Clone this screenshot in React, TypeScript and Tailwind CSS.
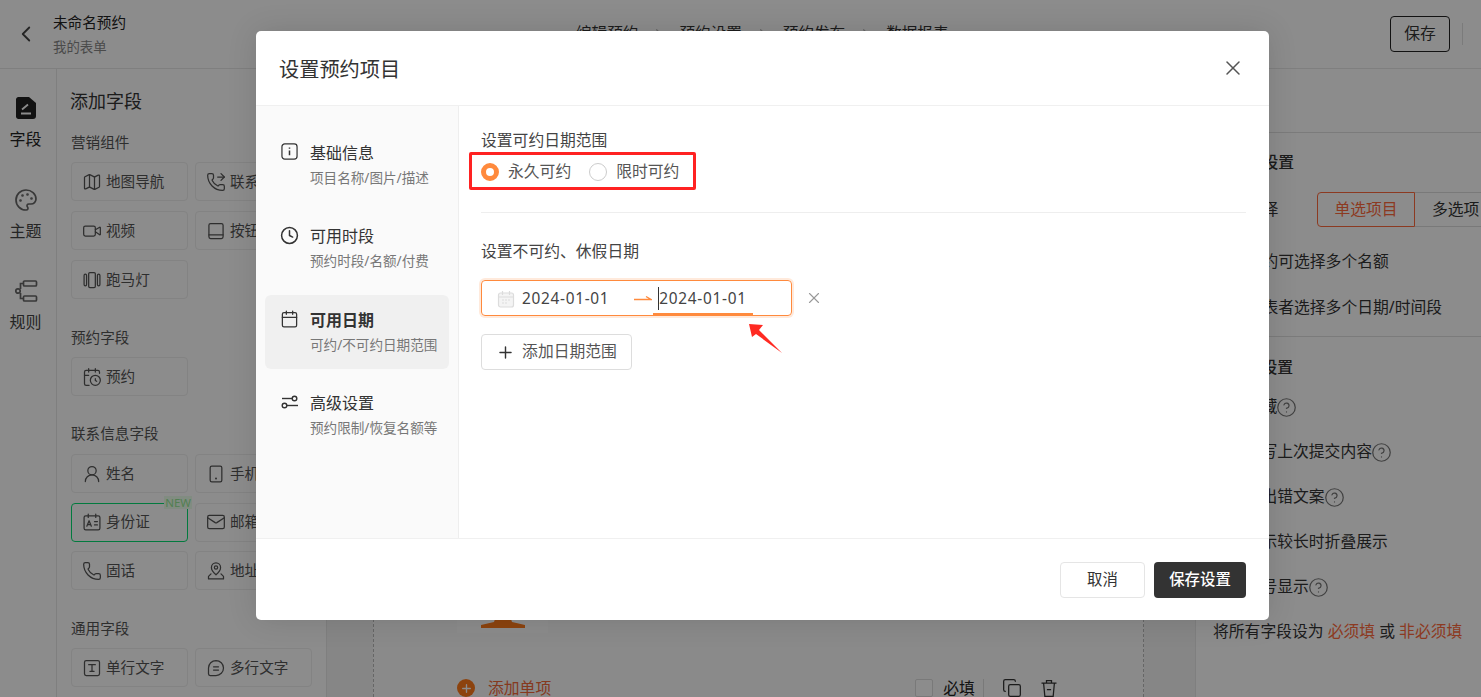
import React from "react";
import { ChevronLeft, ChevronRight, X, Plus, Map as MapIcon, PhoneForwarded, Video, Phone, Mail, CalendarClock, UserRound, CircleQuestionMark, Palette, Clock, Calendar, Copy } from "lucide-react";

const S = ({ children, className = "" }: { children: React.ReactNode; className?: string }) => (
  <svg viewBox="0 0 24 24" fill="none" stroke="currentColor" strokeWidth="1.5" strokeLinecap="round" strokeLinejoin="round" className={className}>
    {children}
  </svg>
);
const ic = "w-[20px] h-[20px] shrink-0";

const BtnIcon = () => <S className={ic}><rect x="3.5" y="3" width="17" height="18" rx="2" /><path d="M3.5 16.5h17" /></S>;
const Marquee = () => <S className={ic}><rect x="8" y="3" width="8" height="18" rx="1.5" /><rect x="2.5" y="5" width="3" height="14" rx="1.5" /><rect x="18.5" y="5" width="3" height="14" rx="1.5" /></S>;
const Tablet = () => <S className={ic}><rect x="5" y="2.5" width="14" height="19" rx="2" /><path d="M12 17.5h.01" strokeWidth="2.4" /></S>;
const IdIcon = () => <S className={ic}><rect x="2.5" y="4.5" width="19" height="17" rx="2" /><path d="M7.5 2.5v4M16.5 2.5v4M5.8 17l2.7-6.5L11.2 17M6.8 15h3.4M15 11.5h3.5M15 15.5h3.5" /></S>;
const AddrIcon = () => <S className={ic}><path d="M12 16.5s-5.5-4.6-5.5-8.8a5.5 5.5 0 0 1 11 0c0 4.2-5.5 8.800-5.500 8.800z" /><circle cx="12" cy="7.800" r="2" /><path d="M6 15.500l-3 3v3h18v-3l-3-3" /></S>;
const TextIcon = () => <S className={ic}><rect x="3" y="3" width="18" height="18" rx="2" /><path d="M8 8h8M12 8v8M9.500 16h5" /></S>;
const MultiIcon = () => <S className={ic}><path d="M12 3a9 9 0 0 1 0 18H5a2 2 0 0 1-2-2v-7a9 9 0 0 1 9-9z" /><path d="M9 10.500h6M9 14.500h6" /></S>;

const Tile = ({ icon, label }: { icon: React.ReactNode; label: string }) => (
  <div className="flex h-[39px] w-[117px] items-center gap-[4px] rounded-[4px] border border-[#eeeeee] pl-[10px] text-[14.6px] text-[#555]">
    {icon}
    <span className="whitespace-nowrap">{label}</span>
  </div>
);

const GreenTile = ({ icon, label }: { icon: React.ReactNode; label: string }) => (
  <div className="relative flex h-[39px] w-[117px] items-center gap-[4px] rounded-[4px] border border-green-400 pl-[10px] text-[14.6px] text-[#555]">
    {icon}
    <span className="whitespace-nowrap">{label}</span>
    <span className="absolute right-[-5px] top-[-8px] bg-[#ecffec] px-[1px] text-[11.5px] leading-[13px] text-[#96e896]">NEW</span>
  </div>
);

const Head = ({ children, className }: { children: React.ReactNode; className: string }) => (
  <div className={"h-[20px] text-[14.6px] leading-[20px] text-[#555] " + className}>{children}</div>
);

const Rail = ({ icon, label, active }: { icon: React.ReactNode; label: string; active?: boolean }) => (
  <div className="flex h-[91.500px] flex-col items-center">
    <div className={"flex h-[22px] items-center justify-center " + (active ? "text-[#222]" : "text-[#666]")}>{icon}</div>
    <div className={"mt-[9px] text-[16px] leading-[22px] " + (active ? "text-[#222]" : "text-[#444]")}>{label}</div>
  </div>
);

const Q = () => <CircleQuestionMark className="-ml-[1px] h-[21px] w-[21px] text-[#777]" strokeWidth={1.4} />;

const SideItem = ({ icon, title, sub, active }: { icon: React.ReactNode; title: string; sub: string; active?: boolean }) => (
  <div className={"flex h-[74px] w-[184px] gap-[11px] rounded-[6px] pl-[15px] pt-[13.500px] " + (active ? "bg-[#f0f0f0]" : "")}>
    <div className="flex h-[20px] w-[19px] items-center justify-center text-[#333]">{icon}</div>
    <div>
      <div className={"text-[16px] leading-[22px] text-[#333] " + (active ? "font-semibold" : "")}>{title}</div>
      <div className="mt-[5px] whitespace-nowrap text-[13.600px] leading-[18px] text-[#777]">{sub}</div>
    </div>
  </div>
);

export default function App() {
  return (
    <div className="relative h-[697px] w-[1481px] overflow-hidden bg-white text-[#333] font-['Noto_Sans','Noto_Sans_CJK_SC',sans-serif]">
      {/* page behind the dialog */}
      <header className="flex h-[69px] items-center border-b border-[#e8e8e8]">
        <ChevronLeft className="ml-[13px] h-[26px] w-[26px] text-[#444]" strokeWidth={1.7} />
        <div className="ml-[14px] w-[200px]">
          <div className="text-[14.6px] leading-[20px] text-[#222]">未命名预约</div>
          <div className="mt-[5px] text-[13.400px] leading-[20px] text-[#888]">我的表单</div>
        </div>
        <nav className="ml-[323px] flex items-center text-[15.600px] text-[#333]">
          <span>编辑预约</span>
          <ChevronRight className="mx-[13px] h-[15px] w-[15px] text-[#bbb]" />
          <span>预约设置</span>
          <ChevronRight className="mx-[13px] h-[15px] w-[15px] text-[#bbb]" />
          <span>预约发布</span>
          <ChevronRight className="mx-[13px] h-[15px] w-[15px] text-[#bbb]" />
          <span>数据报表</span>
        </nav>
        <button className="ml-auto flex h-[36px] w-[60px] items-center justify-center rounded-[4px] border border-[#222] text-[15.800px] text-[#333]">保存</button>
        <div className="ml-[12px] mr-[18px] h-[22px] w-px bg-[#e0e0e0]" />
      </header>

      <div className="flex h-[628px]">
        <aside className="w-[57px] shrink-0 border-r border-[#e8e8e8] pr-[5px] pt-[28px]">
          <Rail active label="字段" icon={
            <svg viewBox="0 0 22 22" className="h-[22px] w-[22px]"><path d="M3 0h11l7 6v13a3 3 0 0 1-3 3H3a3 3 0 0 1-2-2V2a3 3 0 0 1 2-2z" fill="#222" /><path d="M6 16.500h10M7 12.500l6-5" stroke="#fff" strokeWidth="1.8" fill="none" /></svg>
          } />
          <Rail label="主题" icon={<Palette className="h-[24px] w-[24px]" strokeWidth={1.7} />} />
          <Rail label="规则" icon={
            <svg viewBox="0 0 24 24" fill="none" stroke="currentColor" strokeWidth="1.7" className="h-[24px] w-[24px]"><rect x="9.500" y="2" width="13" height="5" rx="1" /><rect x="9.500" y="17" width="13" height="5" rx="1" /><circle cx="4" cy="12" r="2.200" /><path d="M9.500 4.500H6.500v5.500M6.500 14v5.500h3" /></svg>
          } />
        </aside>

        <section className="w-[270px] shrink-0 border-r border-[#e8e8e8] pl-[14px]">
          <div className="-ml-[1px] mt-[20px] h-[24px] text-[18px] leading-[24px] text-[#333]">添加字段</div>
          <Head className="mt-[19px]">营销组件</Head>
          <div className="mt-[10px] grid grid-cols-[117px_117px] gap-x-[7px] gap-y-[10px]">
            <Tile icon={<MapIcon className={ic} strokeWidth={1.5} />} label="地图导航" />
            <Tile icon={<PhoneForwarded className={ic} strokeWidth={1.5} />} label="联系方式" />
            <Tile icon={<Video className={ic} strokeWidth={1.5} />} label="视频" />
            <Tile icon={<BtnIcon />} label="按钮" />
            <Tile icon={<Marquee />} label="跑马灯" />
          </div>
          <Head className="mt-[28px]">预约字段</Head>
          <div className="mt-[10px]">
            <Tile icon={<CalendarClock className={ic} strokeWidth={1.5} />} label="预约" />
          </div>
          <Head className="mt-[27px]">联系信息字段</Head>
          <div className="mt-[11px] grid grid-cols-[117px_117px] gap-x-[7px] gap-y-[9.5px]">
            <Tile icon={<UserRound className={ic} strokeWidth={1.5} />} label="姓名" />
            <Tile icon={<Tablet />} label="手机" />
            <GreenTile icon={<IdIcon />} label="身份证" />
            <Tile icon={<Mail className={ic} strokeWidth={1.5} />} label="邮箱" />
            <Tile icon={<Phone className={ic} strokeWidth={1.5} />} label="固话" />
            <Tile icon={<AddrIcon />} label="地址" />
          </div>
          <Head className="mt-[28px]">通用字段</Head>
          <div className="mt-[10px] grid grid-cols-[117px_117px] gap-x-[7px]">
            <Tile icon={<TextIcon />} label="单行文字" />
            <Tile icon={<MultiIcon />} label="多行文字" />
          </div>
        </section>

        <main className="flex w-[868px] shrink-0 bg-[#f5f5f5] pl-[46px]">
          <div className="flex h-full w-[771px] flex-col justify-end border-x border-dashed border-[#bbbbbb] bg-[#fbfbfb]">
            <div className="ml-[83px] flex h-[42px] w-[91px] items-end justify-center bg-white pb-[5px]">
              <svg viewBox="0 0 44 9" className="h-[9px] w-[44px]"><path d="M14 0h16l1 3 13 3v3H0V6l13-3z" fill="#ff7a1a" /></svg>
            </div>
            <div className="mt-[46px] flex h-[18px] items-center text-[15.800px] leading-[18px]">
              <div className="ml-[83px] flex h-[18px] w-[18px] items-center justify-center rounded-full bg-[#ff7a1a]">
                <Plus className="h-[13px] w-[13px] text-white" strokeWidth={2.5} />
              </div>
              <span className="ml-[13px] text-[#f2693a]">添加单项</span>
              <div className="ml-[364px] h-[18px] w-[18px] rounded-[2px] border border-[#ddd] bg-white" />
              <span className="ml-[10px] text-[#222]">必填</span>
              <div className="ml-[8px] h-[18px] w-px bg-[#ddd]" />
              <Copy className="ml-[18px] h-[20px] w-[20px] text-[#333]" strokeWidth={1.5} />
              <svg viewBox="0 0 24 24" fill="none" stroke="#333" strokeWidth="1.500" className="ml-[17px] h-[20px] w-[20px]"><path d="M3 6h18M9 6V3h6v3M5.500 6l1.500 16h10l1.500-16M9.500 14h5" /></svg>
            </div>
          </div>
        </main>

        <aside className="w-[286px] shrink-0 border-l border-[#e8e8e8] text-[15.800px] text-[#333]">
          <div className="h-[64px] border-b border-[#e0e0e0]" />
          <div className="border-b border-[#e0e0e0] pl-[19px]">
            <div className="mt-[19px] flex h-[22px] items-center font-medium">可选项设置</div>
            <div className="mt-[18px] flex h-[35px] items-center">
              <span className="w-[102px] shrink-0">项目选择</span>
              <div className="flex h-[35px] w-[98px] shrink-0 items-center justify-center rounded-l-[4px] border border-[#ff6b3d] text-[#ff6b3d]">单选项目</div>
              <div className="flex h-[35px] w-[98px] shrink-0 items-center whitespace-nowrap border-y border-[#dddddd] pl-[17px]">多选项目</div>
            </div>
            <div className="mt-[23px] h-[22px] whitespace-nowrap leading-[22px]">每次预约可选择多个名额</div>
            <div className="mb-[18px] mt-[24px] h-[22px] whitespace-nowrap leading-[22px]">允许填表者选择多个日期/时间段</div>
          </div>
          <div className="pl-[18px]">
            <div className="mt-[20px] flex h-[22px] items-center font-medium">表单项设置</div>
            <div className="mt-[17px] flex h-[22px] items-center">表单隐藏<Q /></div>
            <div className="mt-[23px] flex h-[22px] items-center whitespace-nowrap">自动填写上次提交内容<Q /></div>
            <div className="mt-[23px] flex h-[22px] items-center whitespace-nowrap">自定义出错文案<Q /></div>
            <div className="mt-[23px] flex h-[22px] items-center whitespace-nowrap">文字显示较长时折叠展示</div>
            <div className="mt-[23px] flex h-[22px] items-center whitespace-nowrap">项目序号显示<Q /></div>
            <div className="-ml-[1px] mt-[23px] flex h-[22px] items-center whitespace-nowrap">将所有字段设为&nbsp;<span className="text-[#ff6b3d]">必须填</span>&nbsp;或&nbsp;<span className="text-[#ff6b3d]">非必须填</span></div>
          </div>
        </aside>
      </div>

      {/* dialog layer */}
      <div className="absolute inset-0 bg-black/45 pl-[256px] pt-[31px]">
        <div className="flex h-[589px] w-[1013px] flex-col overflow-hidden rounded-[5px] bg-white shadow-[0_0_30px_rgba(0,0,0,0.12)]">
          <div className="flex h-[75px] shrink-0 items-center justify-between border-b border-[#f0f0f0] pl-[23px] pr-[24px]">
            <span className="pt-[2px] text-[20.200px] text-[#333]">设置预约项目</span>
            <X className="h-[24px] w-[24px] text-[#555]" strokeWidth={1.5} />
          </div>
          <div className="flex h-[433px] shrink-0 border-b border-[#f0f0f0]">
            <div className="flex w-[203px] shrink-0 flex-col gap-[9.500px] border-r border-[#eeeeee] bg-[#fafafa] pl-[9px] pt-[22px]">
              <SideItem icon={
                <svg viewBox="0 0 18 18" fill="none" stroke="currentColor" strokeWidth="1.300" className="h-[17px] w-[17px]"><rect x="1" y="1" width="16" height="16" rx="3" /><path d="M9 8v5" strokeWidth="1.600" /><path d="M9 4.800v1.400" strokeWidth="1.600" /></svg>
              } title="基础信息" sub="项目名称/图片/描述" />
              <SideItem icon={<Clock className="h-[21px] w-[21px]" strokeWidth={1.9} />} title="可用时段" sub="预约时段/名额/付费" />
              <SideItem active icon={<Calendar className="h-[20px] w-[20px]" strokeWidth={1.6} />} title="可用日期" sub="可约/不可约日期范围" />
              <SideItem icon={
                <svg viewBox="0 0 18 14" fill="none" stroke="currentColor" strokeWidth="1.400" className="h-[14px] w-[18px]"><circle cx="13.500" cy="3.500" r="2.300" /><path d="M1 3.500h10" /><circle cx="3.500" cy="10.500" r="2.300" /><path d="M6 10.500h11" /></svg>
              } title="高级设置" sub="预约限制/恢复名额等" />
            </div>
            <div className="relative flex-1 pl-[22px] pr-[23px]">
              <div className="mt-[23px] h-[22px] text-[15.800px] leading-[22px] text-[#444]">设置可约日期范围</div>
              <div className="mt-[8px] flex h-[26px] items-center text-[15.800px] text-[#555]">
                <span className="h-[18px] w-[18px] rounded-full border-[5px] border-[#ff8a3d] bg-white" />
                <span className="ml-[9px]">永久可约</span>
                <span className="ml-[18px] h-[18px] w-[18px] rounded-full border border-[#cccccc]" />
                <span className="ml-[9px]">限时可约</span>
              </div>
              <div className="mt-[27px] h-px bg-[#eeeeee]" />
              <div className="mt-[27px] h-[22px] text-[15.800px] leading-[22px] text-[#444]">设置不可约、休假日期</div>
              <div className="mt-[18px] flex items-center">
                <div className="relative flex h-[36px] w-[311px] items-center rounded-[4px] border border-[#ff8a3d] pl-[15px] pt-[1px] text-[15.400px] tracking-[0.700px] text-[#444] shadow-[0_0_0_2px_rgba(255,138,61,0.18)]">
                  <svg viewBox="0 0 18 18" className="h-[18px] w-[18px]" fill="#f4f4f4" stroke="#dcdcdc" strokeWidth="1.200"><rect x="1.500" y="3" width="15" height="14" rx="2" /><path d="M1.500 7h15M5.500 1v4M12.500 1v4" fill="none" /><path d="M5 10h2M8 10h2M11 10h2M5 13h2M8 13h2" fill="none" /></svg>
                  <span className="ml-[7px]">2024-01-01</span>
                  <svg viewBox="0 0 18 8" fill="none" stroke="#ff8a3d" strokeWidth="1.300" className="ml-[25px] h-[8px] w-[18px]"><path d="M0 4.500h17L12 1.500" /></svg>
                  <span className="ml-[6px] border-l border-[#333]">2024-01-01</span>
                  <span className="absolute bottom-[0px] left-[171px] h-[2px] w-[100px] bg-[#ff8a3d]" />
                </div>
                <X className="ml-[13px] h-[18px] w-[18px] text-[#999]" strokeWidth={1.5} />
              </div>
              <button className="mt-[18px] flex h-[36px] w-[151px] items-center justify-center gap-[7px] rounded-[4px] border border-[#dddddd] text-[15.800px] text-[#555]">
                <Plus className="h-[19px] w-[19px] text-[#333]" strokeWidth={1.8} />
                添加日期范围
              </button>
              {/* red annotations drawn over the screenshot */}
              <div className="absolute left-[10px] top-[46px] h-[38px] w-[227px] rounded-[2px] border-[3px] border-[#ff2222]" />
              <svg viewBox="0 0 34 30" className="absolute left-[290px] top-[218px] h-[30px] w-[34px]"><path d="M0 0L14 1 10 6 33 29 7 10 3 13Z" fill="#ff2a22" /></svg>
            </div>
          </div>
          <div className="flex flex-1 items-start justify-end gap-[9px] pr-[23px] pt-[23px]">
            <button className="h-[36px] w-[85px] rounded-[4px] border border-[#e5e5e5] text-[15.400px] text-[#333]">取消</button>
            <button className="h-[36px] w-[92px] rounded-[4px] bg-[#333333] text-[15.400px] font-medium text-white">保存设置</button>
          </div>
        </div>
      </div>
    </div>
  );
}
